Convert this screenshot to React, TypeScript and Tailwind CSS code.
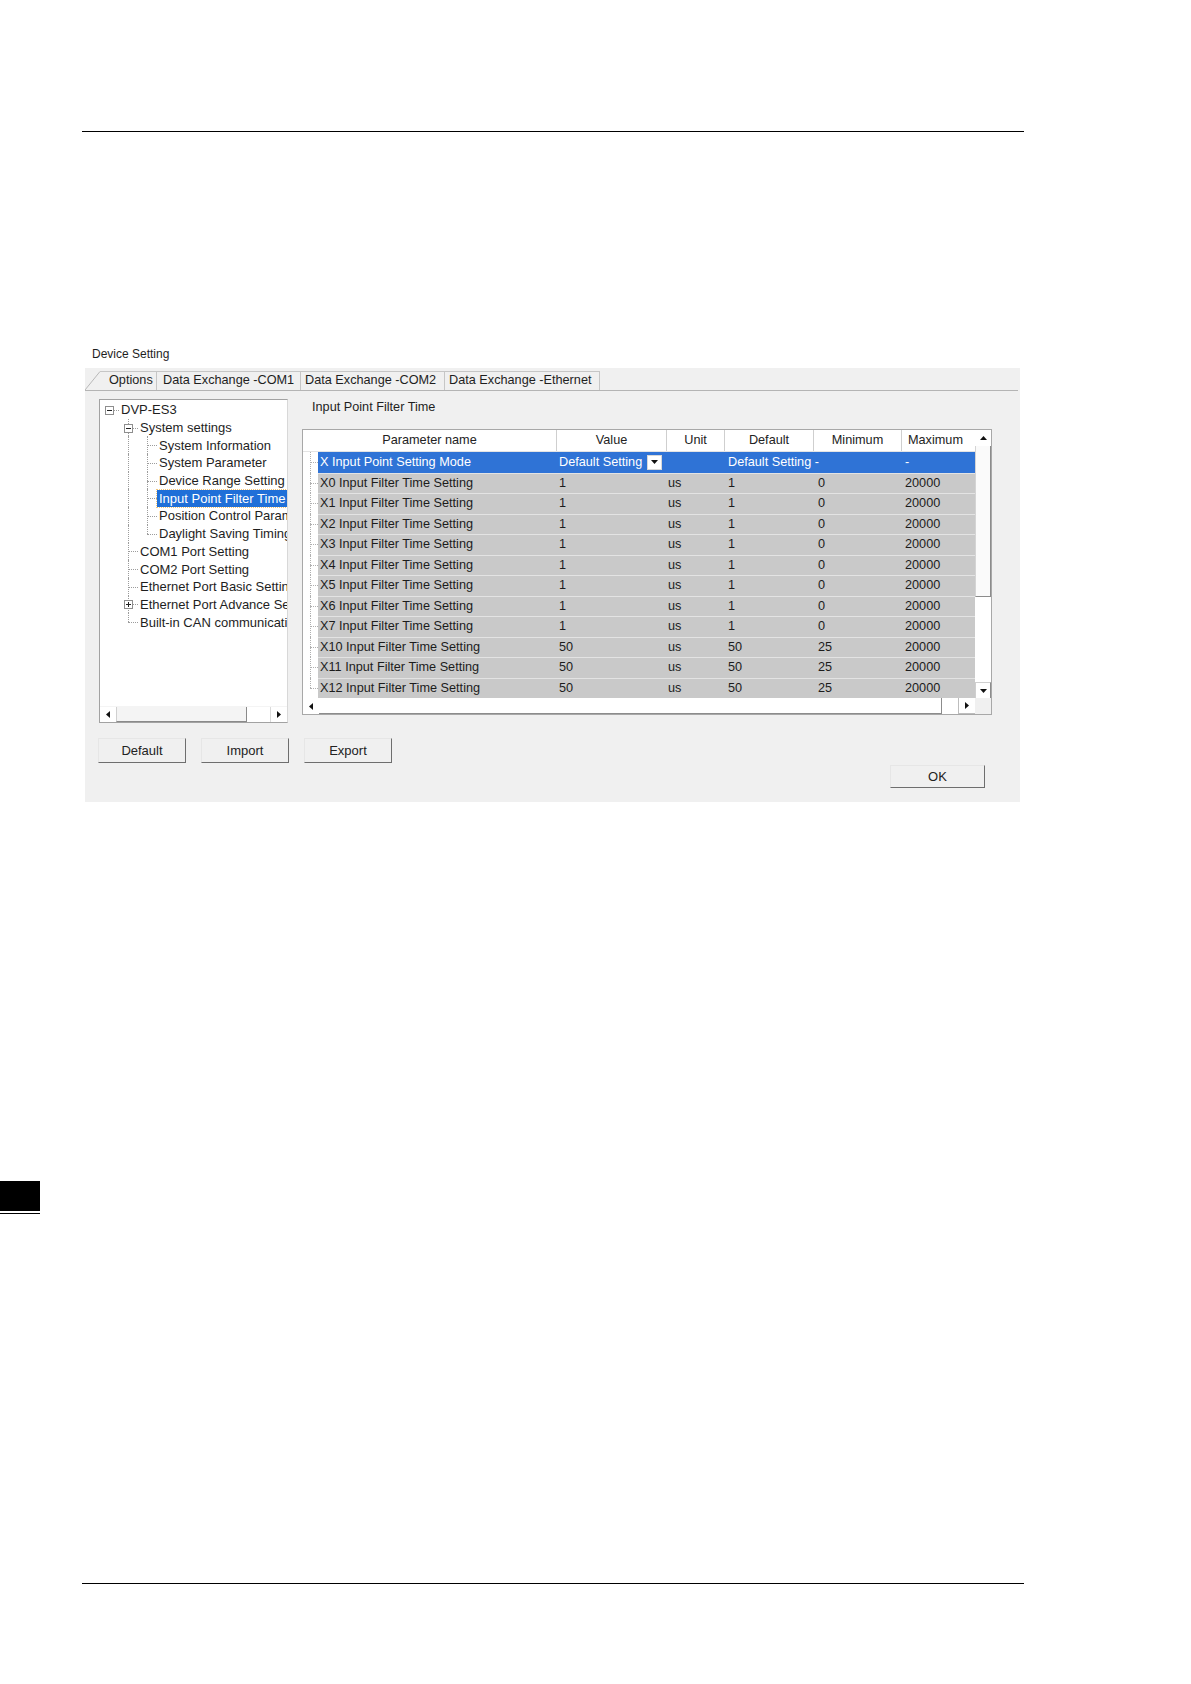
import type { ReactNode } from 'react';

type Rail = 'none' | 'pipe' | 'tee' | 'elbow' | 'root';

interface TreeItem {
  label: string;
  rails: Rail[];
  box?: 'minus' | 'plus';
  selected?: boolean;
}

const treeItems: TreeItem[] = [
  { label: 'DVP-ES3', rails: ['root'], box: 'minus' },
  { label: 'System settings', rails: ['none', 'tee'], box: 'minus' },
  { label: 'System Information', rails: ['none', 'pipe', 'tee'] },
  { label: 'System Parameter', rails: ['none', 'pipe', 'tee'] },
  { label: 'Device Range Setting', rails: ['none', 'pipe', 'tee'] },
  { label: 'Input Point Filter Time', rails: ['none', 'pipe', 'tee'], selected: true },
  { label: 'Position Control Parameter', rails: ['none', 'pipe', 'tee'] },
  { label: 'Daylight Saving Timing', rails: ['none', 'pipe', 'elbow'] },
  { label: 'COM1 Port Setting', rails: ['none', 'tee'] },
  { label: 'COM2 Port Setting', rails: ['none', 'tee'] },
  { label: 'Ethernet Port Basic Setting', rails: ['none', 'tee'] },
  { label: 'Ethernet Port Advance Setting', rails: ['none', 'tee'], box: 'plus' },
  { label: 'Built-in CAN communication', rails: ['none', 'elbow'] },
];

const rows: string[][] = [
  ['X0 Input Filter Time Setting', '1', 'us', '1', '0', '20000'],
  ['X1 Input Filter Time Setting', '1', 'us', '1', '0', '20000'],
  ['X2 Input Filter Time Setting', '1', 'us', '1', '0', '20000'],
  ['X3 Input Filter Time Setting', '1', 'us', '1', '0', '20000'],
  ['X4 Input Filter Time Setting', '1', 'us', '1', '0', '20000'],
  ['X5 Input Filter Time Setting', '1', 'us', '1', '0', '20000'],
  ['X6 Input Filter Time Setting', '1', 'us', '1', '0', '20000'],
  ['X7 Input Filter Time Setting', '1', 'us', '1', '0', '20000'],
  ['X10 Input Filter Time Setting', '50', 'us', '50', '25', '20000'],
  ['X11 Input Filter Time Setting', '50', 'us', '50', '25', '20000'],
  ['X12 Input Filter Time Setting', '50', 'us', '50', '25', '20000'],
];

function Arrow({ dir }: { dir: 'up' | 'down' | 'left' | 'right' }) {
  const pts = {
    up: '0,4 7,4 3.5,0',
    down: '0,0 7,0 3.5,4',
    left: '4,0 4,7 0,3.5',
    right: '0,0 0,7 4,3.5',
  }[dir];
  const vert = dir === 'up' || dir === 'down';
  return (
    <svg width={vert ? 7 : 4} height={vert ? 4 : 7} viewBox={vert ? '0 0 7 4' : '0 0 4 7'}>
      <polygon points={pts} fill="#111" />
    </svg>
  );
}

function TreeRail({ kind, box }: { kind: Rail; box?: 'minus' | 'plus' }) {
  return (
    <div className="relative w-[19px] h-full shrink-0">
      {(kind === 'pipe' || kind === 'tee') && (
        <div className="absolute left-[9px] top-0 bottom-0 border-l border-dotted border-[#9c9c9c]" />
      )}
      {kind === 'elbow' && (
        <div className="absolute left-[9px] top-0 h-1/2 border-l border-dotted border-[#9c9c9c]" />
      )}
      {(kind === 'tee' || kind === 'elbow' || kind === 'root') && (
        <div className="absolute left-[9px] right-0 top-1/2 border-t border-dotted border-[#9c9c9c]" />
      )}
      {box && (
        <div className="absolute left-[5px] top-1/2 -mt-[4px] w-[9px] h-[9px] bg-white">
          <svg width="9" height="9" viewBox="0 0 9 9">
            <rect x="0.5" y="0.5" width="8" height="8" fill="#fff" stroke="#8e8e8e" />
            <line x1="2" y1="4.5" x2="7" y2="4.5" stroke="#222" />
            {box === 'plus' && <line x1="4.5" y1="2" x2="4.5" y2="7" stroke="#222" />}
          </svg>
        </div>
      )}
    </div>
  );
}

function Tab({ children, width, pad }: { children: ReactNode; width: string; pad: string }) {
  return (
    <div className={`${width} ${pad} h-full flex items-center border-t border-r border-[#c6c6c6] whitespace-nowrap`}>
      {children}
    </div>
  );
}

function WinButton({ label, className }: { label: string; className: string }) {
  return (
    <div
      className={`${className} flex items-center justify-center bg-[#f0f0f0] border border-t-[#e6e6e6] border-l-[#e6e6e6] border-r-[#6e6e6e] border-b-[#6e6e6e] text-[13px] text-[#222]`}
    >
      {label}
    </div>
  );
}

function IndentRail({ last }: { last?: boolean }) {
  return (
    <div className="relative w-[15px] h-full shrink-0 bg-white">
      <div
        className={`absolute left-[7px] top-0 border-l border-dotted border-[#b0b0b0] ${last ? 'h-1/2' : 'bottom-0'}`}
      />
      <div className="absolute left-[7px] right-0 top-1/2 border-t border-dotted border-[#b0b0b0]" />
    </div>
  );
}

export default function App() {
  return (
    <div className="w-[1191px] h-[1684px] bg-white flex flex-col font-['Liberation_Sans',Arial,sans-serif] text-[#1e1e1e]">
      <div className="mt-[131px] ml-[82px] w-[942px] h-px bg-black" />

      <div className="mt-[214px] ml-[92px] h-[16px] leading-[16px] text-[12px]">Device Setting</div>

      {/* dialog */}
      <div className="mt-[6px] ml-[85px] w-[935px] h-[434px] bg-[#f0f0f0] flex flex-col">
        {/* tab strip */}
        <div className="mt-[3px] mr-[2px] h-[20px] flex border-b border-[#b4b4b4] text-[12.7px]">
          <svg width="15" height="19" viewBox="0 0 15 19" className="shrink-0">
            <line x1="0" y1="19" x2="15" y2="0.5" stroke="#b8b8b8" />
          </svg>
          <Tab width="w-[57px]" pad="pl-[9px]">Options</Tab>
          <Tab width="w-[144px]" pad="pl-[6px]">Data Exchange -COM1</Tab>
          <Tab width="w-[144px]" pad="pl-[4px]">Data Exchange -COM2</Tab>
          <Tab width="w-[155px]" pad="pl-[4px]">Data Exchange -Ethernet</Tab>
        </div>

        {/* body */}
        <div className="mt-[8px] pl-[14px] flex">
          {/* tree */}
          <div className="w-[189px] h-[324px] bg-white border border-[#a2a2a2] border-r-[#d8d8d8] flex flex-col">
            <div className="flex-1 overflow-hidden pt-[1px] text-[13px]">
              {treeItems.map((it) => (
                <div key={it.label} className="h-[17.7px] flex items-stretch whitespace-nowrap">
                  {it.rails.map((r, i) => (
                    <TreeRail key={i} kind={r} box={i === it.rails.length - 1 ? it.box : undefined} />
                  ))}
                  <div className="flex items-center">
                    {it.selected ? (
                      <span className="px-[2px] h-[17px] leading-[17px] bg-[#1f6fd8] text-white outline-1 outline-dotted outline-[#f2c67a]">
                        {it.label}
                      </span>
                    ) : (
                      <span className="pl-[2px] leading-[17px]">{it.label}</span>
                    )}
                  </div>
                </div>
              ))}
            </div>
            <div className="h-[16px] flex border-t border-[#f4f4f4]">
              <div className="w-[16px] flex items-center justify-center">
                <Arrow dir="left" />
              </div>
              <div className="w-[131px] bg-[#f4f4f4] border-r border-b border-[#8a8a8a] border-l border-l-[#d0d0d0]" />
              <div className="w-[23px]" />
              <div className="w-[17px] flex items-center justify-center border-l border-[#dadada]">
                <Arrow dir="right" />
              </div>
            </div>
          </div>

          {/* right pane */}
          <div className="ml-[14px] flex flex-col">
            <div className="pl-[10px] h-[16px] leading-[16px] text-[12.7px]">Input Point Filter Time</div>

            <div className="mt-[14px] w-[690px] h-[286px] border border-[#a8a8a8] bg-white flex flex-col text-[12.7px]">
              <div className="flex h-[268px]">
                <div className="w-[672px] flex flex-col">
                  {/* header */}
                  <div className="h-[22px] shrink-0 flex items-stretch bg-white border-b border-[#e4e4e4] text-[#222]">
                    <div className="w-[254px] flex items-center justify-center border-r border-[#cfcfcf]">Parameter name</div>
                    <div className="w-[110px] flex items-center justify-center border-r border-[#cfcfcf]">Value</div>
                    <div className="w-[58px] flex items-center justify-center border-r border-[#cfcfcf]">Unit</div>
                    <div className="w-[89px] flex items-center justify-center border-r border-[#cfcfcf]">Default</div>
                    <div className="w-[88px] flex items-center justify-center border-r border-[#cfcfcf]">Minimum</div>
                    <div className="w-[73px] flex items-center pl-[6px] whitespace-nowrap overflow-hidden">Maximum</div>
                  </div>

                  {/* selected row */}
                  <div className="h-[20.5px] shrink-0 flex items-stretch">
                    <IndentRail />
                    <div className="flex-1 flex items-center bg-[#2f73d6] text-white whitespace-nowrap">
                      <div className="w-[239px] pl-[2px]">X Input Point Setting Mode</div>
                      <div className="w-[110px] pl-[2px] flex items-center">
                        <span className="w-[88px]">Default Setting</span>
                        <span className="w-[15px] h-[15px] bg-white flex items-center justify-center border border-[#d8d8d8]">
                          <Arrow dir="down" />
                        </span>
                      </div>
                      <div className="w-[58px]" />
                      <div className="w-[89px] pl-[3px]">Default Setting -</div>
                      <div className="w-[88px]" />
                      <div className="w-[73px] pl-[3px]">-</div>
                    </div>
                  </div>

                  {rows.map((r, idx) => (
                    <div key={r[0]} className="h-[20.5px] shrink-0 flex items-stretch">
                      <IndentRail last={idx === rows.length - 1} />
                      <div className="flex-1 flex items-center bg-[#c9c9c9] border-t border-[#e3e3e3] whitespace-nowrap text-[#1c1c1c]">
                        <div className="w-[239px] pl-[2px]">{r[0]}</div>
                        <div className="w-[110px] pl-[2px]">{r[1]}</div>
                        <div className="w-[58px] pl-[1px]">{r[2]}</div>
                        <div className="w-[89px] pl-[3px]">{r[3]}</div>
                        <div className="w-[88px] pl-[4px]">{r[4]}</div>
                        <div className="w-[73px] pl-[3px]">{r[5]}</div>
                      </div>
                    </div>
                  ))}
                </div>

                {/* vertical scrollbar */}
                <div className="w-[16px] flex flex-col bg-white">
                  <div className="h-[16px] flex items-center justify-center">
                    <Arrow dir="up" />
                  </div>
                  <div className="h-[151px] bg-[#fafafa] border-l border-[#d4d4d4] border-r border-r-[#8c8c8c] border-b border-b-[#8c8c8c]" />
                  <div className="flex-1" />
                  <div className="h-[16px] flex items-center justify-center border-l border-t border-[#cfcfcf] border-r border-r-[#8c8c8c]">
                    <Arrow dir="down" />
                  </div>
                </div>
              </div>

              {/* horizontal scrollbar */}
              <div className="flex h-[16px]">
                <div className="w-[16px] flex items-center justify-center">
                  <Arrow dir="left" />
                </div>
                <div className="w-[623px] bg-white border-b border-r border-[#8c8c8c]" />
                <div className="w-[16px]" />
                <div className="w-[17px] flex items-center justify-center border-l border-b border-[#bdbdbd]">
                  <Arrow dir="right" />
                </div>
                <div className="w-[16px] bg-[#f0f0f0]" />
              </div>
            </div>
          </div>
        </div>

        {/* buttons */}
        <div className="mt-[15px] pl-[13px] flex gap-[15px]">
          <WinButton label="Default" className="w-[88px] h-[25px]" />
          <WinButton label="Import" className="w-[88px] h-[25px]" />
          <WinButton label="Export" className="w-[88px] h-[25px]" />
        </div>
        <div className="mt-[2px] pl-[805px] flex">
          <WinButton label="OK" className="w-[95px] h-[23px]" />
        </div>
      </div>

      {/* chapter marker */}
      <div className="mt-[379px] w-[40px] h-[30px] bg-black" />
      <div className="mt-[2px] w-[40px] h-px bg-black" />

      <div className="mt-[369px] ml-[82px] w-[942px] h-px bg-black" />
    </div>
  );
}
